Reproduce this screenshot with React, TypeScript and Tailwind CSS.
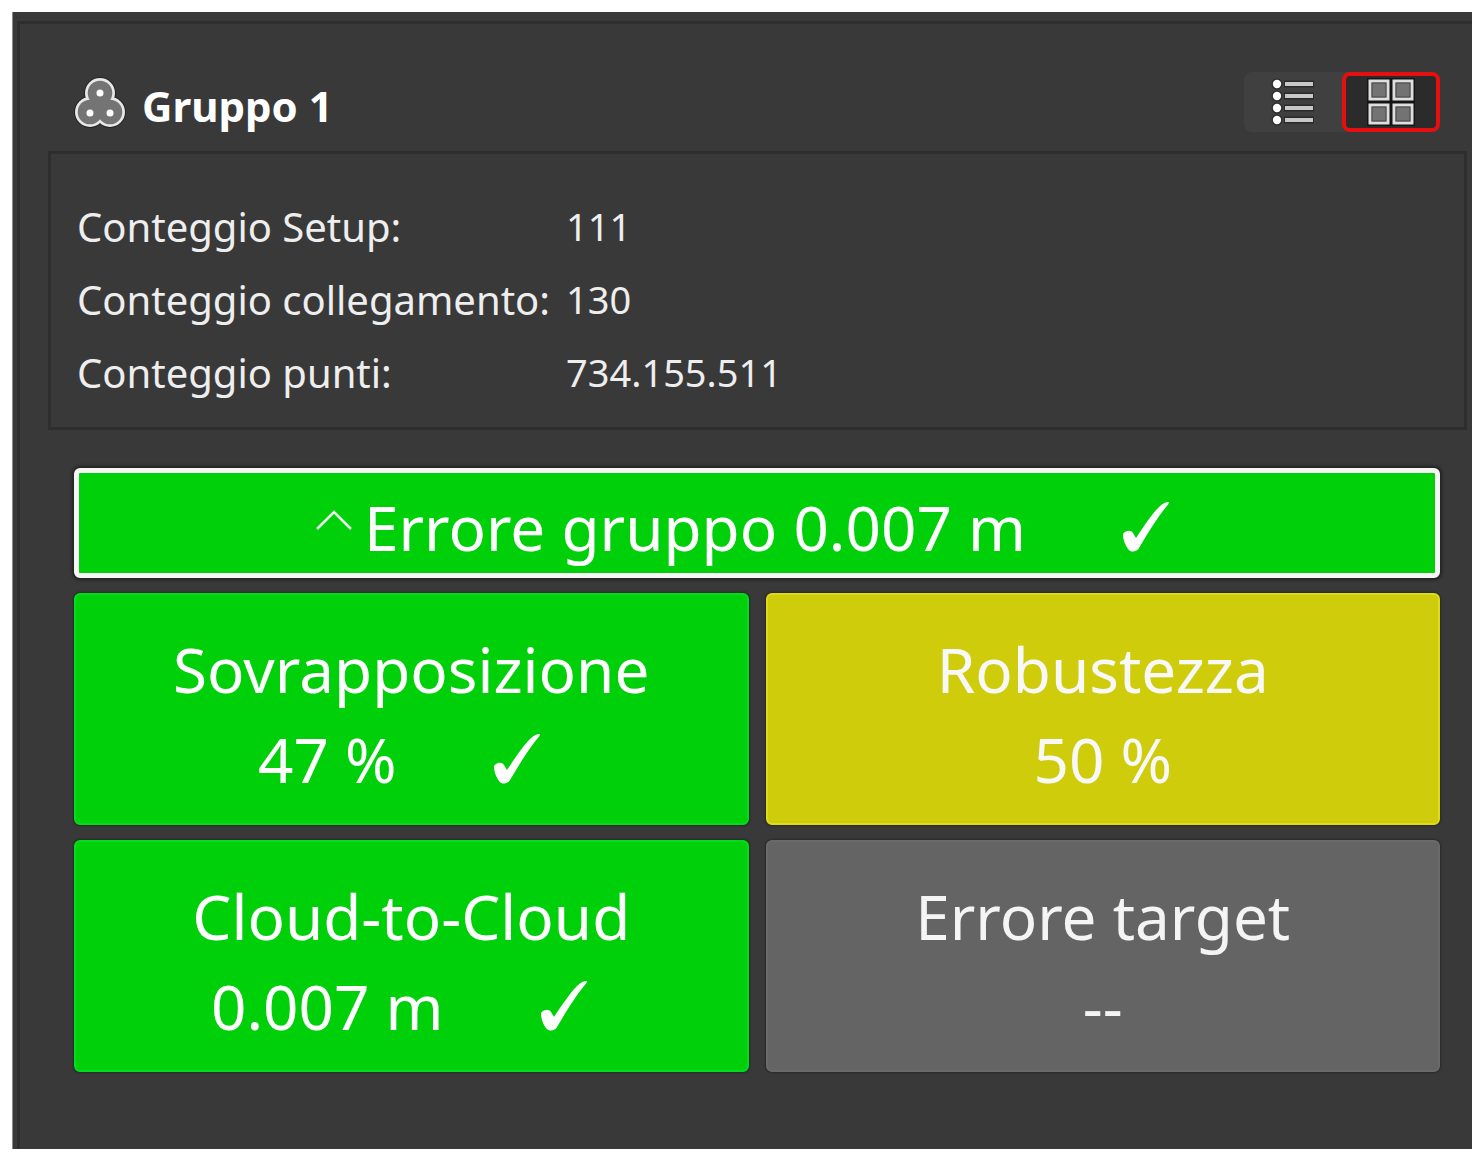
import { useState } from 'react'
import clsx from 'clsx'

type Tone = 'good' | 'warning' | 'none'

interface Metric {
  label: string
  value: string
  tone: Tone
}

const counts = [
  { label: 'Conteggio Setup:', value: '111' },
  { label: 'Conteggio collegamento:', value: '130' },
  { label: 'Conteggio punti:', value: '734.155.511' },
]

const metrics: Metric[] = [
  { label: 'Sovrapposizione', value: '47 %', tone: 'good' },
  { label: 'Robustezza', value: '50 %', tone: 'warning' },
  { label: 'Cloud-to-Cloud', value: '0.007 m', tone: 'good' },
  { label: 'Errore target', value: '--', tone: 'none' },
]

const toneClasses: Record<Tone, string> = {
  good: 'bg-[#00d00a] border-[#00dc1e] text-white',
  warning: 'bg-[#cfcd0b] border-[#dcdc18] text-[#f8f8f8]',
  none: 'bg-[#646464] border-[#6a6a6a] text-[#f4f4f4]',
}

function GroupIcon() {
  return (
    <svg width="52" height="52" viewBox="0 0 52 52" aria-hidden="true">
      <g fill="#242424">
        <circle cx="26" cy="17" r="16" />
        <circle cx="16" cy="36" r="16" />
        <circle cx="36" cy="36" r="16" />
      </g>
      <g fill="#e8e8e8">
        <circle cx="26" cy="17" r="15" />
        <circle cx="16" cy="36" r="15" />
        <circle cx="36" cy="36" r="15" />
      </g>
      <g fill="#747474">
        <circle cx="26" cy="17" r="12.3" />
        <circle cx="16" cy="36" r="12.3" />
        <circle cx="36" cy="36" r="12.3" />
        <path d="M17 25h18l-2 12H19z" />
      </g>
      <g fill="#fff">
        <circle cx="26" cy="17" r="3.5" />
        <circle cx="16" cy="37" r="3.5" />
        <circle cx="36" cy="37" r="3.5" />
      </g>
    </svg>
  )
}

function ListIcon() {
  return (
    <svg width="44" height="48" viewBox="0 0 44 48" aria-hidden="true">
      {[6, 18, 30, 42].map((y) => (
        <g key={y}>
          <circle cx="6" cy={y} r="5.5" fill="#2a2a2a" />
          <circle cx="6" cy={y} r="4.2" fill="#fff" />
          <path d={`M13 ${y}h30`} stroke="#2a2a2a" strokeWidth="7" />
          <path d={`M14 ${y}h28`} stroke="#c8c8c8" strokeWidth="4" />
        </g>
      ))}
    </svg>
  )
}

function GridIcon() {
  return (
    <svg width="48" height="48" viewBox="0 0 48 48" aria-hidden="true">
      <path d="M0 0h48v48H0z" fill="#151515" />
      {[3, 27].map((y) =>
        [3, 27].map((x) => (
          <g key={`${x}-${y}`}>
            <rect x={x} y={y} width="18" height="18" fill="#737373" stroke="#dedede" strokeWidth="3" />
            <rect x={x + 2} y={y + 2} width="14" height="14" fill="none" stroke="#494949" />
          </g>
        ))
      )}
    </svg>
  )
}

function CheckIcon() {
  return (
    <svg width="48" height="50" viewBox="0 0 48 50" fill="#fff" aria-hidden="true">
      <path d="M1 32C4 28 9 28 11 31L14 36C22 24 30 12 37 5C41 1 44 0 47 0C47 1 46 3 44 5C36 15 27 29 17 46C15 50 9 51 6 47C3 43 1 38 1 32Z" />
    </svg>
  )
}

function MetricTile({ label, value, tone }: Metric) {
  return (
    <div
      className={clsx(
        'flex flex-col items-center rounded-md border-2 pt-[29px] pb-[19px] text-[62px] leading-[90px] shadow-[0_0_2px_1px_#2b282b]',
        toneClasses[tone]
      )}
    >
      <h2>{label}</h2>
      {tone === 'good' ? (
        <p className="flex items-center gap-24 pr-6">
          {value}
          <CheckIcon />
        </p>
      ) : (
        <p>{value}</p>
      )}
    </div>
  )
}

export default function App() {
  const [view, setView] = useState<'list' | 'grid'>('grid')
  const [expanded, setExpanded] = useState(true)

  return (
    <div className="flex min-h-screen flex-col bg-white px-3 pt-3 pb-4 font-['Noto_Sans',sans-serif]">
      <main className="flex grow flex-col border-l border-[#8a8a8a] bg-[#393939] pt-[9px] pl-1">
        <div className="grow border-t-3 border-l-3 border-[#2e2e2e] pt-12 pr-[5px] pl-7">
          <header className="flex items-center justify-between pr-[27px] pb-[19px] pl-[26px]">
            <div className="flex items-center gap-4">
              <GroupIcon />
              <h1 className="pt-2 text-[42px] leading-[52px] font-bold text-white">Gruppo 1</h1>
            </div>
            <div className="flex rounded-lg bg-[#404040]">
              <button
                type="button"
                aria-label="Elenco"
                aria-pressed={view === 'list'}
                onClick={() => setView('list')}
                className={clsx(
                  'flex h-[60px] w-[98px] items-center justify-center rounded-lg border-4',
                  view === 'list' ? 'border-[#e60f0f] bg-[#2b2b2b]' : 'border-transparent'
                )}
              >
                <ListIcon />
              </button>
              <button
                type="button"
                aria-label="Griglia"
                aria-pressed={view === 'grid'}
                onClick={() => setView('grid')}
                className={clsx(
                  'flex h-[60px] w-[98px] items-center justify-center rounded-lg border-4',
                  view === 'grid' ? 'border-[#e60f0f] bg-[#2b2b2b]' : 'border-transparent'
                )}
              >
                <GridIcon />
              </button>
            </div>
          </header>

          <dl className="grid grid-cols-[489px_1fr] border-3 border-[#2e2e2e] pt-9 pb-[18px] pl-[26px] text-[40px] leading-[73px] text-[#eeeeee]">
            {counts.map((c) => (
              <div key={c.label} className="contents">
                <dt className="whitespace-nowrap">{c.label}</dt>
                <dd className="text-[38px]">{c.value}</dd>
              </div>
            ))}
          </dl>

          <section className="flex flex-col gap-[15px] pt-[38px] pr-[27px] pl-[26px]">
            <button
              type="button"
              aria-expanded={expanded}
              onClick={() => setExpanded(!expanded)}
              className="flex items-center justify-center rounded-md border-5 border-[#f6f6f6] bg-[#00d00a] pt-[9px] pr-7 pb-px text-[62px] leading-[90px] text-white shadow-[0_0_3px_2px_#222222]"
            >
              <svg
                width="36"
                height="40"
                viewBox="0 0 36 40"
                fill="none"
                stroke="#e9ffec"
                strokeWidth="2.5"
                className={clsx('mr-3', !expanded && 'rotate-180')}
                aria-hidden="true"
              >
                <path d="M1 22L18 5L35 22" />
              </svg>
              <span>Errore gruppo 0.007 m</span>
              <span className="ml-24">
                <CheckIcon />
              </span>
            </button>

            {expanded && (
              <div className="grid grid-cols-2 gap-x-[17px] gap-y-[15px]">
                {metrics.map((m) => (
                  <MetricTile key={m.label} {...m} />
                ))}
              </div>
            )}
          </section>
        </div>
      </main>
    </div>
  )
}
